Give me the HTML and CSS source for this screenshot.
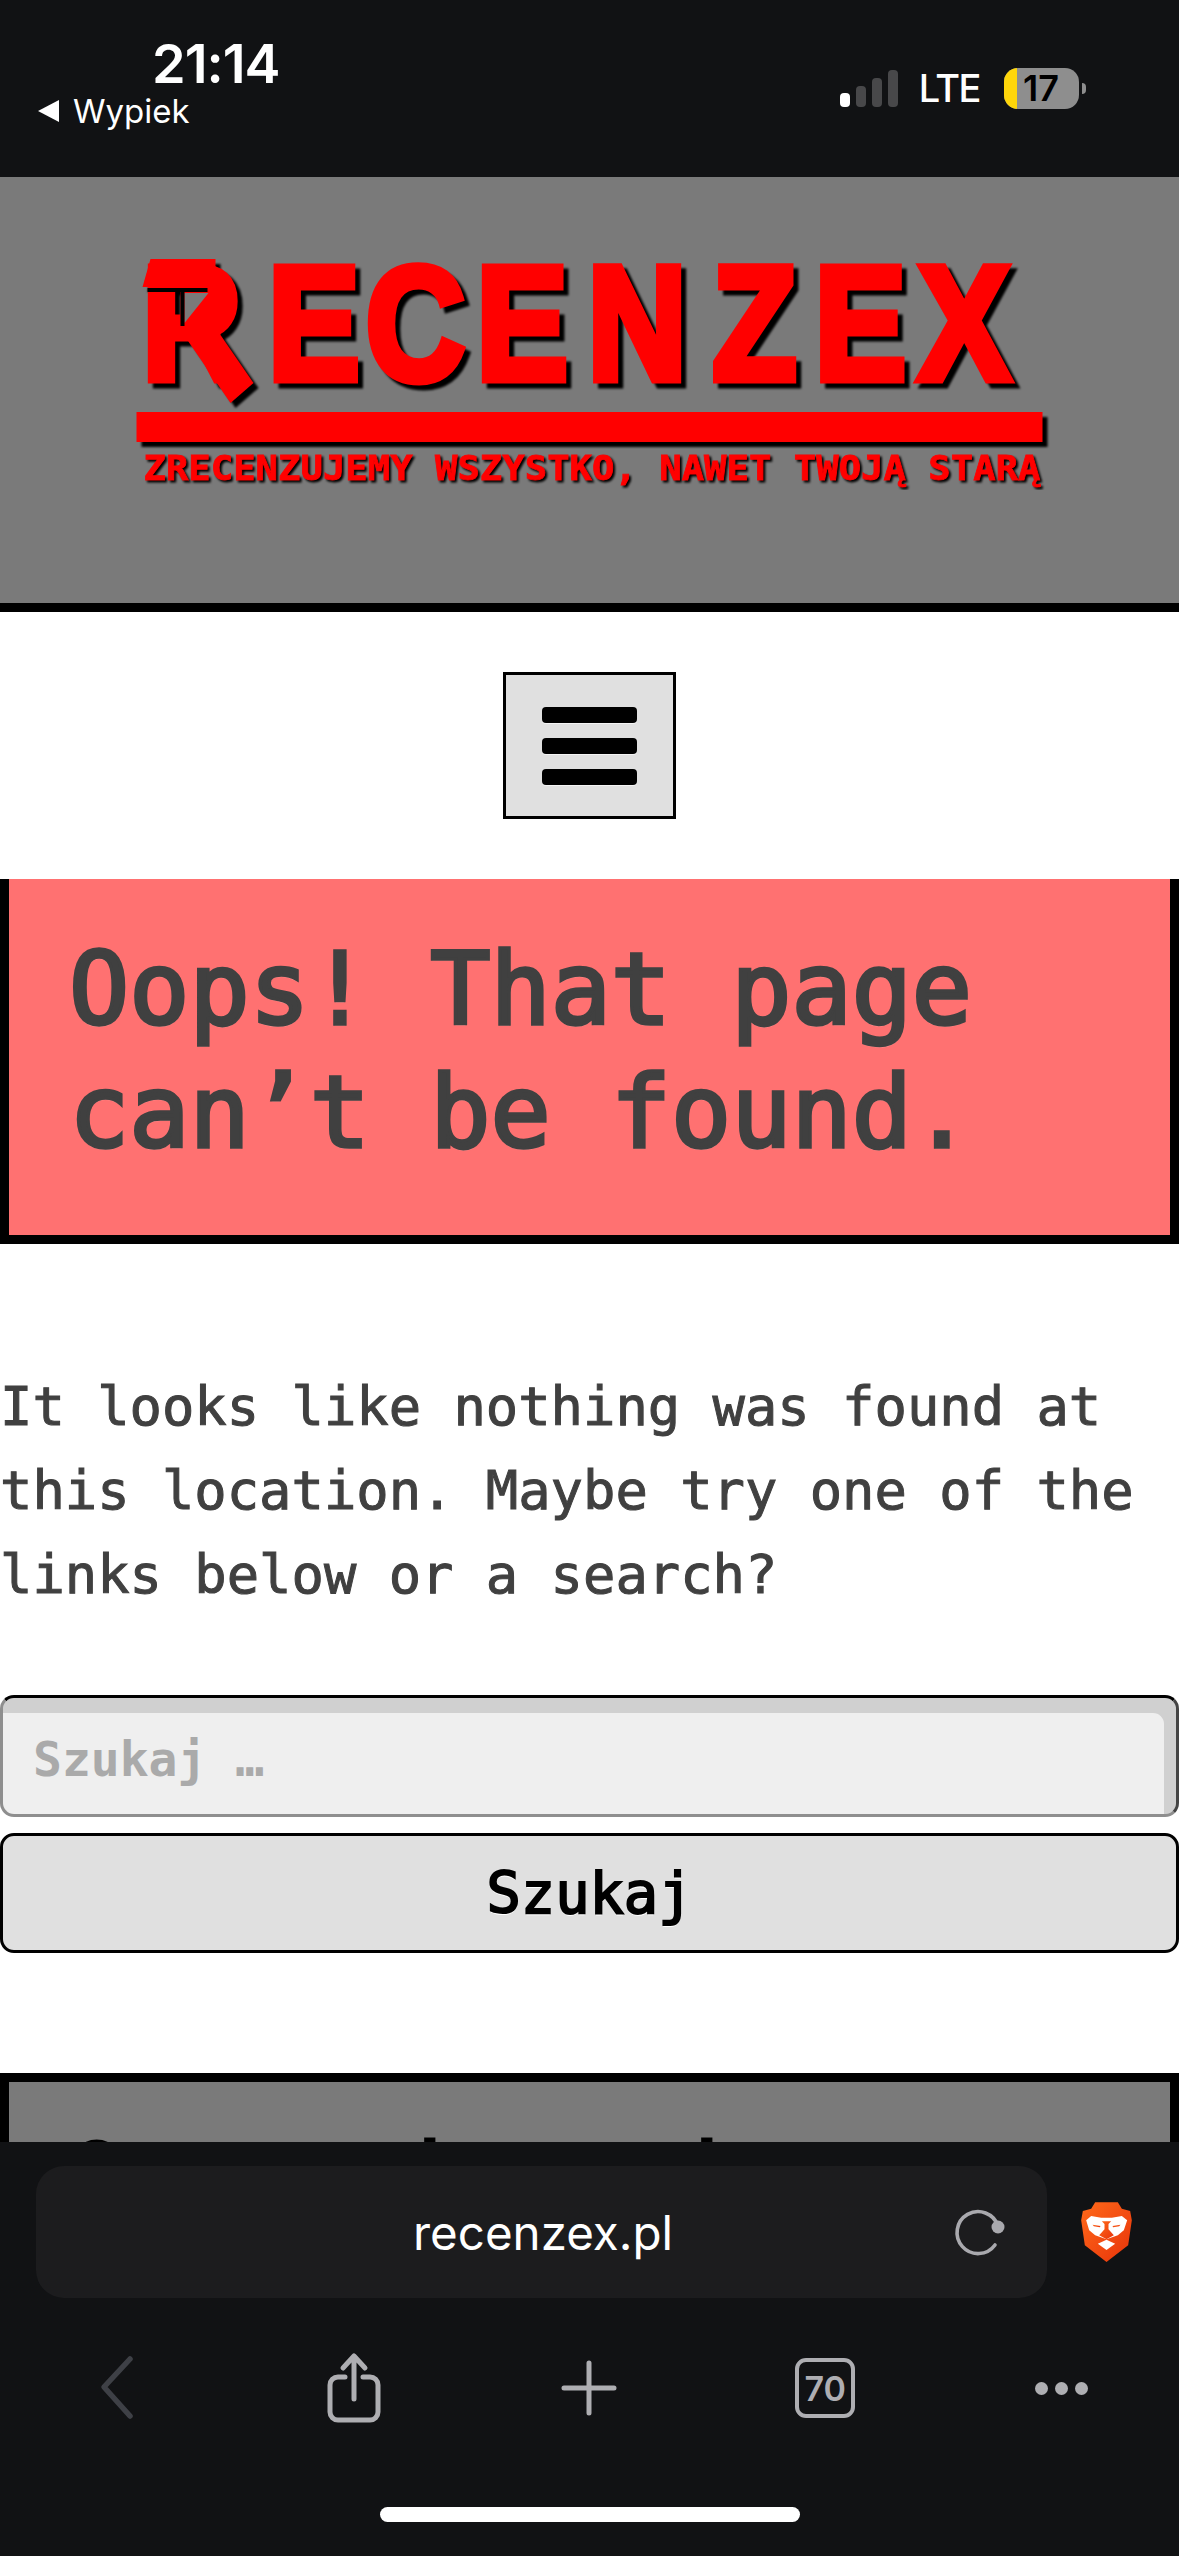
FILE: index.html
```html
<!DOCTYPE html>
<html lang="en">
<head>
    <meta charset="UTF-8">
    <meta name="viewport" content="width=device-width, initial-scale=1.0">
    <title>Recenzex - Page not found</title>
    <link rel="stylesheet" href="styles.css">
</head>
<body>

    <!-- Status Bar -->
    <div class="status-bar">
        <div class="status-left">
            <span class="status-time">21:14</span>
            <span class="status-back"><span class="back-arrow"></span>Wypiek</span>
        </div>
        <div class="status-right">
            <div class="signal">
                <span class="signal-bar signal-on s1"></span>
                <span class="signal-bar s2"></span>
                <span class="signal-bar s3"></span>
                <span class="signal-bar s4"></span>
            </div>
            <span class="network">LTE</span>
            <div class="battery"><span class="battery-low"></span><span class="battery-num">17</span></div>
            <span class="battery-nub"></span>
        </div>
    </div>

    <!-- Page -->
    <div class="page">
        <header class="site-header">
            <svg class="logo" viewBox="129.5 250 920 240" width="920" height="240">
                <g class="logo-big">
                    <g transform="scale(0.85 1)">
                        <text class="logo-name" x="167 315 430 560 691 838 958 1080" y="379">RECENZEX</text>
                    </g>
                    <polygon points="220,335 253,383 230,403 180,330" fill="#ff0000"/>
                    <polygon points="150,259 215,259 215,287 142,287" fill="#ff0000"/>
                    <rect x="180" y="290" width="40" height="45" fill="#ff0000"/>
                    <rect x="136" y="412" width="906" height="30" fill="#ff0000"/>
                </g>
                <polygon points="184,293 208,293 184,323" fill="#7a7a7a"/>
                <rect x="147" y="288" width="60" height="4" fill="#000"/>
                <rect x="180" y="292" width="4" height="34" fill="#000"/>
                <text class="logo-tag" x="143" y="480" textLength="897" lengthAdjust="spacingAndGlyphs">ZRECENZUJEMY WSZYSTKO, NAWET TWOJĄ STARĄ</text>
            </svg>
        </header>

        <nav class="site-nav">
            <button class="menu-toggle" type="button">
                <span class="menu-line"></span>
                <span class="menu-line"></span>
                <span class="menu-line"></span>
            </button>
        </nav>

        <div class="error-title">
            <h1>Oops! That page can’t be found.</h1>
        </div>

        <p class="error-text">It looks like nothing was found at this location. Maybe try one of the links below or a search?</p>

        <form class="search-form">
            <input class="search-field" type="search" placeholder="Szukaj …">
            <button class="search-submit" type="button">Szukaj</button>
        </form>

        <div class="widget">
            <h2>Ostatnie wpisy</h2>
        </div>
    </div>

    <!-- Browser Toolbar -->
    <div class="browser-bar">
        <div class="url-row">
            <div class="url-box">
                <span class="url-text">recenzex.pl</span>
                <svg class="reload" viewBox="0 0 54 54" width="54" height="54">
                    <path d="M46 21 A21 21 0 1 0 43 40" fill="none" stroke="#a9a9ae" stroke-width="3.6" stroke-linecap="round"/>
                    <circle cx="46" cy="22" r="6.5" fill="#a9a9ae"/>
                </svg>
            </div>
            <svg class="brave" viewBox="0 0 152 180" width="51" height="60">
                <defs>
                    <linearGradient id="braveGrad" x1="0" y1="0" x2="1" y2="1">
                        <stop offset="0" stop-color="#ff6a1a"/>
                        <stop offset="1" stop-color="#e8330a"/>
                    </linearGradient>
                </defs>
                <polygon points="42,1 110,1 122,20 147,27 152,55 141,130 76,180 11,130 0,55 5,27 30,20" fill="url(#braveGrad)"/>
                <polygon points="15,55 30,42 60,47 92,47 122,42 138,55 128,85 110,100 76,112 42,100 24,85" fill="#fff"/>
                <polygon points="62,58 90,58 82,66 82,82 98,100 76,112 54,100 70,82 70,66" fill="url(#braveGrad)"/>
                <polygon points="34,68 58,72 56,76 38,73" fill="url(#braveGrad)"/>
                <polygon points="118,68 94,72 96,76 114,73" fill="url(#braveGrad)"/>
                <polygon points="50,125 76,113 102,125 76,144" fill="#fff"/>
            </svg>
        </div>
        <div class="tool-row">
            <div class="tool">
                <svg viewBox="0 0 40 66" width="40" height="66">
                    <path d="M32 4 L6 32 L32 61" fill="none" stroke="#3e4046" stroke-width="5.5" stroke-linecap="round" stroke-linejoin="round"/>
                </svg>
            </div>
            <div class="tool">
                <svg viewBox="0 0 54 72" width="54" height="72">
                    <path d="M27 4 V47 M16 16 L27 4 L38 16" fill="none" stroke="#aeaeb2" stroke-width="5" stroke-linecap="round" stroke-linejoin="round"/>
                    <path d="M18 25 H11 A8 8 0 0 0 3 33 V60 A8 8 0 0 0 11 68 H43 A8 8 0 0 0 51 60 V33 A8 8 0 0 0 43 25 H36" fill="none" stroke="#aeaeb2" stroke-width="5" stroke-linecap="round"/>
                </svg>
            </div>
            <div class="tool">
                <svg viewBox="0 0 56 56" width="56" height="56">
                    <path d="M3 28 H53 M28 3 V53" fill="none" stroke="#aeaeb2" stroke-width="5" stroke-linecap="round"/>
                </svg>
            </div>
            <div class="tool">
                <span class="tab-count">70</span>
            </div>
            <div class="tool">
                <div class="more-dots"><span></span><span></span><span></span></div>
            </div>
        </div>
        <div class="home-row"><span class="home-bar"></span></div>
    </div>

</body>
</html>
```

FILE: styles.css
```css
body {
    margin: 0;
    width: 1179px;
    height: 2556px;
    display: flex;
    flex-direction: column;
    overflow: hidden;
    background-color: #fff;
    font-family: "DejaVu Sans Mono", monospace;
    color: #404040;
}

/* Status bar */
.status-bar {
    height: 177px;
    flex-shrink: 0;
    box-sizing: border-box;
    background-color: #111214;
    color: #fff;
    display: flex;
    justify-content: space-between;
    padding: 36px 93px 0 38px;
    font-family: Inter, sans-serif;
}

.status-left {
    display: flex;
    flex-direction: column;
}

.status-time {
    font-size: 54px;
    font-weight: 600;
    line-height: 56px;
    margin-left: 114px;
    letter-spacing: -1px;
}

.status-back {
    display: flex;
    align-items: center;
    gap: 14px;
    margin-top: -3px;
    font-size: 33px;
    line-height: 44px;
}

.back-arrow {
    width: 0;
    height: 0;
    border-top: 11px solid transparent;
    border-bottom: 11px solid transparent;
    border-right: 21px solid #fff;
}

.status-right {
    display: flex;
    align-items: center;
    height: 48px;
    margin-top: 28px;
}

.signal {
    display: flex;
    align-items: flex-end;
    gap: 6px;
    height: 37px;
    margin-right: 21px;
}

.signal-bar {
    width: 10px;
    border-radius: 4px;
    background-color: #48484a;
}

.signal-on {
    background-color: #fff;
}

.s1 { height: 14px; }
.s2 { height: 21px; }
.s3 { height: 29px; }
.s4 { height: 37px; }

.network {
    font-size: 38px;
    font-weight: 500;
    letter-spacing: -1.5px;
    margin-right: 24px;
}

.battery {
    width: 75px;
    height: 41px;
    border-radius: 14px;
    background-color: #8e8e8e;
    display: flex;
    align-items: center;
    overflow: hidden;
}

.battery-low {
    width: 13px;
    height: 100%;
    background-color: #ffd60a;
}

.battery-num {
    font-size: 36px;
    font-weight: 600;
    color: #000;
    margin-left: 6px;
}

.battery-nub {
    width: 4px;
    height: 11px;
    margin-left: 3px;
    border-radius: 0 5px 5px 0;
    background-color: #8e8e8e;
}

/* Page content */
.page {
    flex: 1;
    min-height: 0;
    overflow: hidden;
}

.site-header {
    height: 426px;
    background-color: #7a7a7a;
    border-bottom: 9px solid #000;
    display: flex;
    justify-content: center;
}

.logo {
    margin-top: 73px;
}

.logo-big {
    filter: drop-shadow(5px 5px 1px #000);
}

.logo-name {
    font-family: "Liberation Sans", sans-serif;
    font-size: 161px;
    font-weight: 700;
    fill: #ff0000;
    stroke: #ff0000;
    stroke-width: 9px;
}

.logo-tag {
    font-family: "DejaVu Sans Mono", monospace;
    font-size: 34px;
    font-weight: 700;
    fill: #ff0000;
    stroke: #ff0000;
    stroke-width: 0.8px;
    filter: drop-shadow(2px 2px 1px #000);
}

.site-nav {
    display: flex;
    justify-content: center;
    padding: 60px 0;
}

.menu-toggle {
    width: 173px;
    height: 147px;
    box-sizing: border-box;
    padding: 0;
    background-color: #e0e0e0;
    border: 3px solid #000;
    display: flex;
    flex-direction: column;
    align-items: center;
    justify-content: center;
    gap: 15px;
}

.menu-line {
    width: 95px;
    height: 16px;
    border-radius: 4px;
    background-color: #000;
    box-shadow: 0 1px 0 #f4f4f4;
}

.error-title {
    height: 356px;
    background-color: #ff7171;
    border: 9px solid #000;
    border-top: 0;
    padding: 0 60px;
    display: flex;
    align-items: center;
}

.error-title h1 {
    margin: -12px 0 0;
    font-size: 100px;
    font-weight: 400;
    line-height: 123px;
    -webkit-text-stroke: 3.5px #404040;
    text-shadow: 0 2px 0 rgba(255, 255, 255, 0.25);
}

.error-text {
    margin: 121px 0 0;
    font-size: 53.8px;
    line-height: 84px;
    -webkit-text-stroke: 1px #404040;
}

.search-form {
    margin-top: 78px;
    display: flex;
    flex-direction: column;
    gap: 16px;
}

.search-field {
    width: 100%;
    height: 122px;
    box-sizing: border-box;
    margin: 0;
    padding: 6px 30px 0;
    font-family: "DejaVu Sans Mono", monospace;
    font-size: 48px;
    font-weight: 700;
    background-color: #efefef;
    border: 3px solid #8e8e8e;
    border-top-color: #000;
    border-right-color: #444;
    border-radius: 14px;
    box-shadow: inset -12px 15px 0 #d0d0d0;
    -webkit-appearance: none;
}

.search-field::placeholder {
    color: #aaa;
}

.search-submit {
    width: 100%;
    height: 120px;
    box-sizing: border-box;
    margin: 0;
    padding: 0;
    font-family: "DejaVu Sans Mono", monospace;
    font-size: 57px;
    font-weight: 400;
    -webkit-text-stroke: 2px #000;
    color: #000;
    background-color: #e0e0e0;
    border: 3px solid #000;
    border-radius: 14px;
    text-shadow: 0 2px 0 #fff;
}

.widget {
    margin-top: 120px;
    background-color: #7a7a7a;
    border: 9px solid #000;
    padding: 42px 60px;
}

.widget h2 {
    margin: 0;
    font-size: 92px;
    font-weight: 400;
    line-height: 110px;
    -webkit-text-stroke: 3px #000;
    color: #000;
}

/* Browser toolbar */
.browser-bar {
    height: 414px;
    flex-shrink: 0;
    box-sizing: border-box;
    background-color: #111214;
    font-family: Inter, sans-serif;
    display: flex;
    flex-direction: column;
    padding-top: 24px;
}

.url-row {
    display: flex;
    align-items: center;
    padding: 0 47px 0 36px;
    justify-content: space-between;
}

.url-box {
    width: 1011px;
    height: 132px;
    box-sizing: border-box;
    background-color: #1c1c1e;
    border-radius: 28px;
    display: flex;
    align-items: center;
    justify-content: space-between;
    padding: 0 41px 0 0;
}

.url-text {
    margin-left: 377px;
    font-size: 47.5px;
    color: #fff;
}

.tool-row {
    margin-top: 50px;
    display: grid;
    grid-template-columns: repeat(5, 1fr);
    height: 80px;
}

.tool {
    display: flex;
    align-items: center;
    justify-content: center;
}

.tab-count {
    width: 60px;
    height: 60px;
    box-sizing: border-box;
    border: 4px solid #aeaeb2;
    border-radius: 11px;
    display: flex;
    align-items: center;
    justify-content: center;
    font-size: 34px;
    font-weight: 600;
    color: #aeaeb2;
}

.more-dots {
    display: flex;
    gap: 7px;
}

.more-dots span {
    width: 13px;
    height: 13px;
    border-radius: 50%;
    background-color: #aeaeb2;
}

.home-row {
    margin-top: 79px;
    display: flex;
    justify-content: center;
}

.home-bar {
    width: 420px;
    height: 15px;
    border-radius: 8px;
    background-color: #fff;
}
```
